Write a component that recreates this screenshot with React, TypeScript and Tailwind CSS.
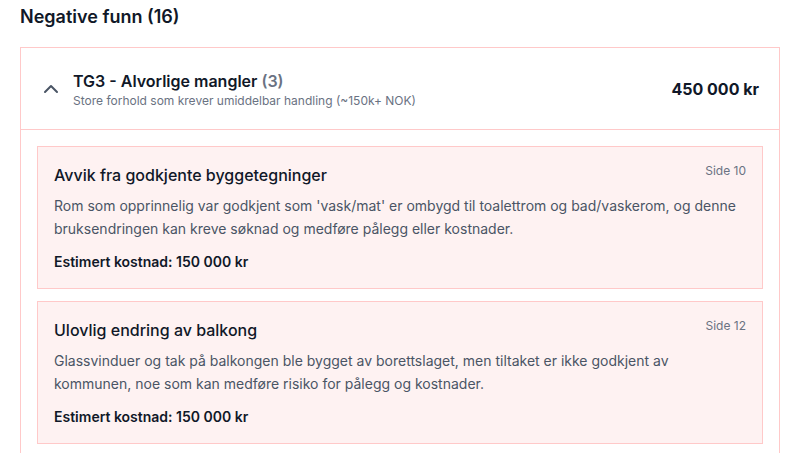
import { ChevronUp } from "lucide-react";

type Finding = {
  title: string;
  page: number;
  description: string;
  cost: string;
};

const findings: Finding[] = [
  {
    title: "Avvik fra godkjente byggetegninger",
    page: 10,
    description:
      "Rom som opprinnelig var godkjent som 'vask/mat' er ombygd til toalettrom og bad/vaskerom, og denne bruksendringen kan kreve søknad og medføre pålegg eller kostnader.",
    cost: "150 000 kr",
  },
  {
    title: "Ulovlig endring av balkong",
    page: 12,
    description:
      "Glassvinduer og tak på balkongen ble bygget av borettslaget, men tiltaket er ikke godkjent av kommunen, noe som kan medføre risiko for pålegg og kostnader.",
    cost: "150 000 kr",
  },
];

function FindingCard({ finding }: { finding: Finding }) {
  return (
    <div className="border border-red-200 bg-red-50 p-4">
      <div className="flex items-start justify-between gap-4">
        <h4 className="text-base font-medium text-gray-900">{finding.title}</h4>
        <span className="text-xs leading-4 text-gray-500">Side {finding.page}</span>
      </div>
      <p className="mt-[7px] text-sm leading-[23px] text-gray-600">{finding.description}</p>
      <p className="mt-3 text-sm font-semibold text-gray-900">
        Estimert kostnad: {finding.cost}
      </p>
    </div>
  );
}

export default function App() {
  return (
    <div className="min-h-screen bg-white px-5 pt-[3px] font-['Inter',sans-serif] text-gray-900">
      <h2 className="text-lg font-semibold">Negative funn (16)</h2>

      <section className="mt-4 border border-red-200">
        <div className="flex items-center justify-between border-b border-red-200 pb-5 pl-[18px] pr-5 pt-[21px]">
          <div className="flex items-center gap-2.5">
            <ChevronUp className="h-6 w-6 text-gray-600" strokeWidth={2} />
            <div>
              <h3 className="text-base font-semibold text-gray-900">
                TG3 - Alvorlige mangler <span className="text-gray-500">(3)</span>
              </h3>
              <p className="text-xs text-gray-500">
                Store forhold som krever umiddelbar handling (~150k+ NOK)
              </p>
            </div>
          </div>
          <span className="text-base font-bold text-gray-900">450 000 kr</span>
        </div>

        <div className="space-y-3 p-4">
          {findings.map((f) => (
            <FindingCard key={f.title} finding={f} />
          ))}
        </div>
      </section>
    </div>
  );
}
